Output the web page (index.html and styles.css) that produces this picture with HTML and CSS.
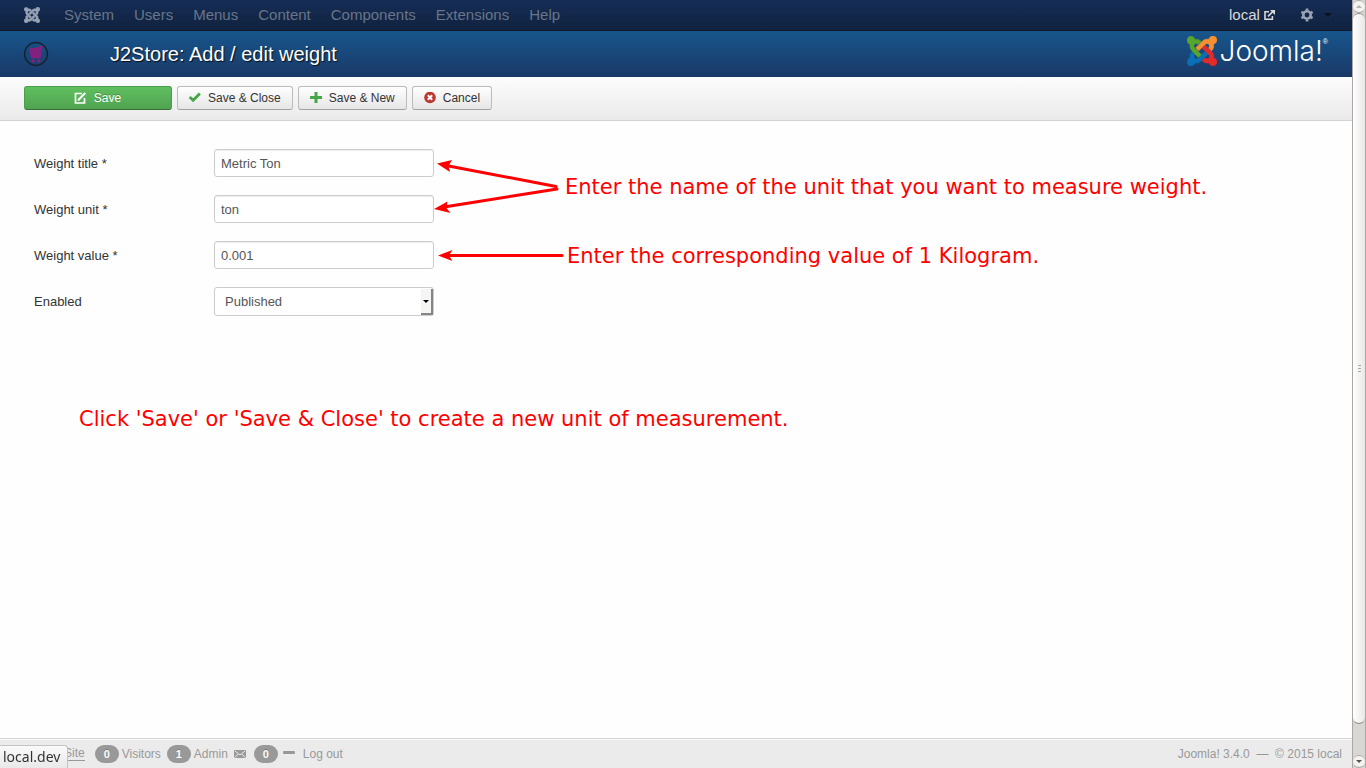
FILE: index.html
```html
<!DOCTYPE html>
<html lang="en">
<head>
<meta charset="utf-8">
<title>J2Store: Add / edit weight</title>
<link rel="stylesheet" href="styles.css">
</head>
<body>
<svg class="defs" width="0" height="0" aria-hidden="true">
  <defs>
    <path id="j-blue" d="M16.719 14.759L14.22 17.26l-2.37 2.37-.462.466c-1.368 1.365-3.297 1.83-5.047 1.397-.327 1.424-1.604 2.49-3.13 2.49C1.438 23.983 0 22.547 0 20.772c0-1.518 1.055-2.789 2.469-3.123-.446-1.76.016-3.705 1.396-5.08l.179-.18 2.37 2.37-.184.181c-.769.779-.769 2.024 0 2.789.771.78 2.022.78 2.787 0l.465-.465 2.367-2.371 2.502-2.506z"/>
    <path id="j-red" d="M17.643 21.411c-1.822.563-3.885.12-5.328-1.318l-.18-.185 2.365-2.369.18.184c.771.768 2.018.768 2.787 0 .765-.765.769-2.01-.004-2.781l-.466-.465-2.365-2.37-2.502-2.503 2.37-2.369 2.499 2.505 2.367 2.37.464.464c1.365 1.36 1.846 3.278 1.411 5.021 1.56.224 2.759 1.56 2.759 3.18 0 1.784-1.439 3.21-3.209 3.21-1.545 0-2.851-1.096-3.135-2.565z"/>
    <path id="j-orange" d="M6.975 9.461l2.508-2.505 2.37-2.369.462-.461C13.74 2.7 15.772 2.251 17.58 2.79 17.775 1.221 19.12 0 20.75 0c1.775 0 3.211 1.438 3.211 3.213 0 1.629-1.229 2.97-2.807 3.186.54 1.807.092 3.855-1.338 5.279l-.184.184-2.369-2.369.184-.184c.769-.77.769-2.017 0-2.786-.769-.768-2.01-.765-2.779.004l-.461.461-2.367 2.37-2.505 2.505z"/>
    <path id="j-green" d="M4.377 12.256l-.462-.466c-1.4-1.403-1.86-3.39-1.371-5.171C1.098 6.311 0 5.025 0 3.487 0 1.712 1.436.276 3.211.276c1.548 0 2.842 1.094 3.146 2.551 1.69-.36 3.522.12 4.84 1.44l.18.18-2.37 2.37-.18-.18c-.771-.771-2.02-.771-2.786 0-.765.764-.769 2.009 0 2.78l.465.465 2.37 2.37 2.5 2.5-2.37 2.37-2.505-2.5z"/>
  </defs>
</svg>
<div class="page">
  <nav class="navbar">
    <a class="brand" href="#" aria-label="Joomla">
      <svg width="16" height="16" viewBox="0 0 24 24" fill="#98a2b5" stroke="#98a2b5" stroke-width=".6"><use href="#j-blue"/><use href="#j-red"/><use href="#j-orange"/><use href="#j-green"/></svg>
    </a>
    <ul class="menu">
      <li><a href="#">System</a></li>
      <li><a href="#">Users</a></li>
      <li><a href="#">Menus</a></li>
      <li><a href="#">Content</a></li>
      <li><a href="#">Components</a></li>
      <li><a href="#">Extensions</a></li>
      <li><a href="#">Help</a></li>
    </ul>
    <a class="site-link" href="#">local
      <svg width="11" height="10" viewBox="0 0 11 10" fill="none" stroke="#d9d9d9"><path stroke-width="1.6" d="M5 1.8H1v7.4h7.4V6"/><path stroke-width="1.7" d="M4 6.4L9 1.4"/><path fill="#d9d9d9" stroke="none" d="M6 0h5v5z"/></svg>
    </a>
    <button class="settings" type="button" aria-label="Settings">
      <svg width="14" height="14" viewBox="0 0 14 14"><circle cx="7" cy="7" r="3.7" fill="none" stroke="#98a2b5" stroke-width="2.6"/><path stroke="#98a2b5" stroke-width="2.6" d="M7 .5v2M7 11.500v2M1.400 3.800l1.700 1M10.900 9.200l1.700 1M1.400 10.200l1.700-1M10.900 4.800l1.700-1"/></svg>
      <span class="caret"></span>
    </button>
  </nav>

  <header class="header">
    <svg class="cart" width="26" height="26" viewBox="0 0 26 26"><circle cx="13" cy="13" r="11.400" fill="none" stroke="#17212f" stroke-width="1.500"/><path fill="#8f1d7d" d="M6 7.500l10-1.200 1-1.300h3.300v1.100h-1.200l-1.500 11.200H8.100z"/><path stroke="#5b3080" stroke-width=".5" fill="none" d="M7 10.500h11M7.500 13.500h10M9.500 8l1 9M12.500 7.500v9.500M15.500 7.500l-.5 9.500"/><circle cx="10" cy="20" r="1.700" fill="#8f1d7d"/><circle cx="15.700" cy="20" r="1.700" fill="#8f1d7d"/></svg>
    <h1>J2Store: Add / edit weight</h1>
    <div class="logo">
      <svg width="30" height="30" viewBox="0 0 24 24" stroke-width=".5"><use href="#j-blue" fill="#0b6fb5" stroke="#0b6fb5"/><use href="#j-red" fill="#e52a2a" stroke="#e52a2a"/><use href="#j-orange" fill="#f89031" stroke="#f89031"/><use href="#j-green" fill="#57a52c" stroke="#57a52c"/></svg>
      <span class="wordmark">Joomla!</span><span class="reg">®</span>
    </div>
  </header>

  <div class="toolbar">
    <button class="btn primary" type="button"><svg width="13" height="12" viewBox="0 0 13 12" fill="none" stroke="#fff"><path stroke-width="1.700" d="M8 1.500H1.500v9.500h9V6"/><path stroke-width="2" d="M4.800 7.500L11.300 1"/><path fill="#fff" stroke="none" d="M3.500 9l.6-2.700 2 2z"/></svg>Save</button>
    <button class="btn" type="button"><svg width="13" height="12" viewBox="0 0 13 12"><path fill="none" stroke="#46a546" stroke-width="2.800" d="M1.700 5l3.400 3.300L11.900 1.500"/></svg>Save &amp; Close</button>
    <button class="btn" type="button"><svg width="13" height="12" viewBox="0 0 13 12"><path stroke="#46a546" stroke-width="3" d="M1 5.500h12M7 0v11"/></svg>Save &amp; New</button>
    <button class="btn" type="button"><svg width="13" height="12" viewBox="0 0 13 12"><circle cx="7" cy="5.500" r="5.800" fill="#bd362f"/><path stroke="#fff" stroke-width="2" d="M4.800 3.300l4.400 4.400M9.200 3.300L4.800 7.700"/></svg>Cancel</button>
  </div>

  <main class="content">
    <form class="form">
      <div class="row"><label for="title">Weight title *</label><input id="title" type="text" value="Metric Ton"></div>
      <div class="row"><label for="unit">Weight unit *</label><input id="unit" type="text" value="ton"></div>
      <div class="row"><label for="value">Weight value *</label><input id="value" type="text" value="0.001"></div>
      <div class="row"><label for="enabled">Enabled</label><span class="select"><select id="enabled"><option>Published</option><option>Unpublished</option></select><span class="select-arrow"></span></span></div>
    </form>
    <svg class="arrows" width="132" height="110" viewBox="0 0 132 110" fill="#f00" stroke="#f00">
      <g stroke-width="3" stroke-linecap="round"><path d="M12 14.500L122 35.500M10 56L123 38M14 104.500H128"/></g>
      <g stroke="none"><path d="M3 12.500L18 9l-3.500 6L16 21z"/><path d="M0 58L13.500 50.500 12.500 57l4 5z"/><path d="M4 104.500L18.500 99l-3.500 5.500 3.500 5.500z"/></g>
    </svg>
    <p class="note note-name">Enter the name of the unit that you want to measure weight.</p>
    <p class="note note-value">Enter the corresponding value of 1 Kilogram.</p>
    <p class="note note-save">Click 'Save' or 'Save &amp; Close' to create a new unit of measurement.</p>
  </main>

  <footer class="status">
    <a class="view" href="#">Site</a>
    <span class="badge">0</span><span class="visitors">Visitors</span>
    <span class="badge">1</span><span class="admin">Admin</span>
    <svg class="mail" width="12" height="8" viewBox="0 0 12 8"><rect width="12" height="8" rx="1" fill="#999"/><path fill="none" stroke="#ebebeb" d="M1 1l5 4 5-4M1 7.500l3-3.500M11 7.500L8 4"/></svg>
    <span class="badge">0</span>
    <span class="dash"></span>
    <a class="logout" href="#">Log out</a>
    <span class="copyright">Joomla! 3.4.0 &nbsp;—&nbsp; © 2015 local</span>
  </footer>
</div>
<div class="scrollbar">
  <span class="step"><i class="up"></i></span>
  <span class="thumb"><i></i><i></i><i></i></span>
  <span class="step"><i class="down"></i></span>
</div>
<div class="link-hint">local.dev</div>
</body>
</html>
```

FILE: styles.css
```css
* { box-sizing: border-box; }
body {
  margin: 0;
  height: 100vh;
  display: flex;
  font: 13px/18px "Liberation Sans", Arial, sans-serif;
  color: #333;
  background: #fefefe;
}
a { color: inherit; text-decoration: none; }
svg { flex: none; }
.defs { position: absolute; }
.page { flex: 1; min-width: 0; display: flex; flex-direction: column; }

.navbar {
  display: flex;
  align-items: center;
  height: 31px;
  padding: 0 20px 0 24px;
  background: linear-gradient(#152d56, #10223e);
  border-bottom: 1px solid #0c1828;
  font-size: 15px;
  color: #697589;
}
.brand { display: flex; margin-right: 24px; }
.menu { display: flex; gap: 20px; margin: 0; padding: 0; list-style: none; }
.site-link { margin-left: auto; color: #d9d9d9; font-size: 15px; }
.settings {
  display: flex;
  align-items: center;
  gap: 10px;
  margin-left: 25px;
  padding: 0;
  border: 0;
  background: none;
}
.caret { border: 4px solid transparent; border-top-color: #0a1222; border-bottom: 0; }

.header {
  display: flex;
  align-items: center;
  height: 46px;
  padding: 0 24px 0 23px;
  background: linear-gradient(#17568c, #1a3867);
  color: #fff;
}
.header h1 {
  margin: 0 0 0 61px;
  font-size: 20px;
  line-height: 24px;
  font-weight: normal;
  text-shadow: 1px 1px 1px rgba(0, 0, 0, .8);
}
.logo { display: flex; align-items: center; margin-left: auto; padding-bottom: 6px; }
.wordmark {
  margin-left: 3px;
  font: 300 28px/30px Inter, "DejaVu Sans", sans-serif;
}
.reg { align-self: flex-start; font-size: 7px; line-height: 12px; }

.toolbar {
  display: flex;
  align-items: flex-start;
  gap: 5px;
  height: 44px;
  padding: 9px 24px 0;
  background: linear-gradient(#fdfdfd, #eaeaea);
  border-bottom: 1px solid #d3d3d3;
}
.btn {
  display: flex;
  align-items: center;
  justify-content: center;
  gap: 7px;
  height: 24px;
  padding: 0 11px 0 10px;
  border: 1px solid #bbb;
  border-bottom-color: #a2a2a2;
  border-radius: 3px;
  background: linear-gradient(#fff, #e6e6e6);
  color: #333;
  font: 12px/18px "Liberation Sans", Arial, sans-serif;
}
.primary {
  width: 148px;
  border-color: #48a048 #48a048 #387038;
  background: linear-gradient(#5fbf5f, #51a351);
  color: #fff;
  text-shadow: 0 -1px 0 rgba(0, 0, 0, .25);
}

.content { position: relative; flex: 1; padding: 28px 34px; }
.form { display: flex; flex-direction: column; gap: 18px; }
.row { display: flex; align-items: center; }
.row label { width: 180px; padding-top: 1px; }
.row input, .row select {
  width: 220px;
  height: 28px;
  padding: 4px 6px;
  border: 1px solid #ccc;
  border-radius: 3px;
  background: #fff;
  box-shadow: inset 0 1px 1px rgba(0, 0, 0, .075);
  color: #555;
  font: 13px/18px "Liberation Sans", Arial, sans-serif;
}
.row select { display: block; height: 29px; padding-left: 10px; appearance: none; box-shadow: none; }
.select { position: relative; }
.select-arrow {
  position: absolute;
  top: 2px;
  right: 1px;
  width: 12px;
  height: 26px;
  display: flex;
  align-items: center;
  justify-content: center;
  background: #f5f5f4;
  border-right: 2px solid #858585;
  border-bottom: 2px solid #858585;
  pointer-events: none;
}
.select-arrow::before { content: ""; border: 3px solid transparent; border-top-color: #000; border-bottom: 0; }

.arrows { position: absolute; left: 434px; top: 30px; }
.note {
  position: absolute;
  margin: 0;
  font: 21px/26px "DejaVu Sans", sans-serif;
  color: #f00;
  white-space: nowrap;
}
.note-name { left: 565px; top: 53px; }
.note-value { left: 567px; top: 122px; }
.note-save { left: 79px; top: 285px; }

.status {
  display: flex;
  align-items: center;
  height: 30px;
  padding: 0 10px 0 64px;
  background: #ebebeb;
  border-top: 1px solid #d4d4d4;
  box-shadow: inset 0 1px 0 #fafafa;
  font-size: 12px;
  color: #999;
}
.view { margin-right: 10px; line-height: 14px; border-bottom: 1px solid #999; }
.badge {
  width: 24px;
  height: 18px;
  margin-right: 3px;
  border-radius: 9px;
  background: #999;
  color: #fff;
  font-size: 11px;
  font-weight: bold;
  text-align: center;
  text-shadow: 0 -1px 0 rgba(0, 0, 0, .25);
}
.visitors { margin-right: 6px; }
.admin { margin-right: 6px; }
.mail { margin-right: 8px; }
.dash { width: 12px; height: 3px; margin: 0 8px 2px 2px; border-radius: 1px; background: #999; }
.copyright { margin-left: auto; }

.scrollbar {
  display: flex;
  flex-direction: column;
  width: 14px;
  background: #d9d7d4;
  border: 1px solid #aaa6a2;
  border-width: 0 1px;
}
.step {
  display: flex;
  align-items: center;
  justify-content: center;
  height: 13px;
  border: 1px solid #aaa6a2;
  border-width: 1px 0;
  border-radius: 6px;
  background: #f4f3f2;
}
.up, .down { border: 3px solid transparent; }
.up { border-bottom-color: #b5b2ae; border-top: 0; }
.down { border-top-color: #555; border-bottom: 0; }
.thumb {
  flex: 1;
  display: flex;
  flex-direction: column;
  align-items: center;
  justify-content: center;
  gap: 2px;
  margin-bottom: 31px;
  border: 1px solid #8f8b87;
  border-width: 1px 0;
  border-radius: 6px;
  background: linear-gradient(90deg, #fff, #e9e8e7);
}
.thumb i { width: 3px; height: 1px; background: #aaa; }

.link-hint {
  position: fixed;
  left: 0;
  bottom: 0;
  width: 68px;
  height: 23px;
  padding-left: 3px;
  border: 1px solid #c4c4c4;
  border-width: 1px 1px 0 0;
  border-radius: 0 4px 0 0;
  background: linear-gradient(#fafafa, #e9e9e9);
  color: #333;
  font: 14px/22px "Noto Sans", sans-serif;
}
```
